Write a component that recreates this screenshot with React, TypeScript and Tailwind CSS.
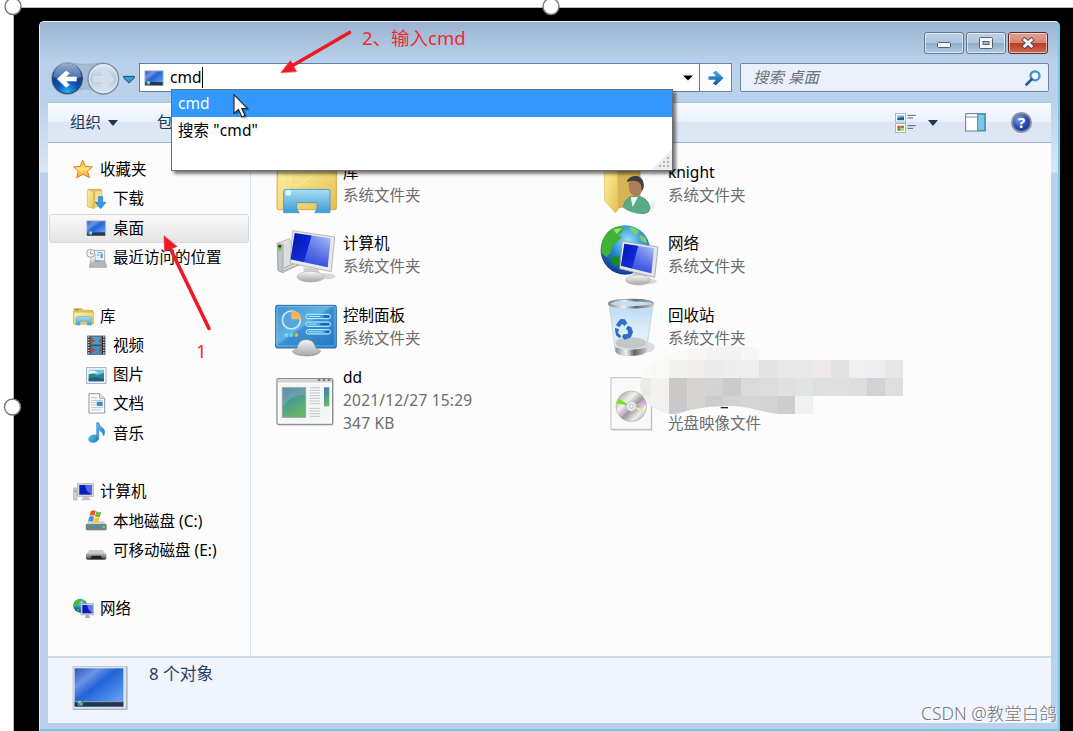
import type { ReactNode } from "react";

interface NavItem {
  label: string;
  level: 0 | 1;
  icon: ReactNode;
  active?: boolean;
}

interface FileItem {
  name: string;
  lines: string[];
  icon: ReactNode;
}

function SmallIcon({ box, children }: { box: string; children: ReactNode }) {
  return (
    <svg className="w-6 h-6 shrink-0" viewBox={box}>
      {children}
    </svg>
  );
}

function LargeIcon({ box, children }: { box: string; children: ReactNode }) {
  return (
    <svg className="w-[68px] h-[68px] shrink-0" viewBox={box}>
      {children}
    </svg>
  );
}

// Shared gradients
function Defs() {
  return (
    <svg className="absolute w-0 h-0">
      <defs>
        <linearGradient id="gold" x1="0" y1="0" x2="1" y2="1">
          <stop offset="0" stopColor="#fbf0a8" />
          <stop offset="0.5" stopColor="#f3dc7c" />
          <stop offset="1" stopColor="#e5bd4c" />
        </linearGradient>
        <linearGradient id="star" x1="0" y1="0" x2="0" y2="1">
          <stop offset="0" stopColor="#ffb043" />
          <stop offset="0.5" stopColor="#ffe478" />
          <stop offset="1" stopColor="#ff9d1e" />
        </linearGradient>
        <linearGradient id="stand" x1="0" y1="0" x2="0" y2="1">
          <stop offset="0" stopColor="#a9dff0" />
          <stop offset="1" stopColor="#3f9bd6" />
        </linearGradient>
        <linearGradient id="screen" x1="0" y1="0" x2="1" y2="0.25">
          <stop offset="0" stopColor="#0612a8" />
          <stop offset="0.5" stopColor="#0a27d8" />
          <stop offset="0.52" stopColor="#7f9df8" />
          <stop offset="1" stopColor="#c3d3ff" />
        </linearGradient>
        <linearGradient id="screenShade" x1="0" y1="0" x2="0" y2="1">
          <stop offset="0" stopColor="#0a20c0" stopOpacity="0" />
          <stop offset="1" stopColor="#1a35e0" stopOpacity="0.85" />
        </linearGradient>
        <linearGradient id="desk" x1="0" y1="0" x2="1" y2="1">
          <stop offset="0" stopColor="#2e55b8" />
          <stop offset="0.25" stopColor="#6c93e4" />
          <stop offset="0.45" stopColor="#2362d8" />
          <stop offset="1" stopColor="#6fb0fb" />
        </linearGradient>
        <linearGradient id="panel" x1="0" y1="0" x2="1" y2="1">
          <stop offset="0" stopColor="#3c93d2" />
          <stop offset="0.45" stopColor="#65b1e3" />
          <stop offset="0.5" stopColor="#3a8fd3" />
          <stop offset="1" stopColor="#2478c3" />
        </linearGradient>
        <linearGradient id="silver" x1="0" y1="0" x2="0" y2="1">
          <stop offset="0" stopColor="#f7f7f7" />
          <stop offset="1" stopColor="#a3a5a7" />
        </linearGradient>
        <linearGradient id="drive" x1="0" y1="0" x2="0" y2="1">
          <stop offset="0" stopColor="#c4c4c4" />
          <stop offset="1" stopColor="#3a3c40" />
        </linearGradient>
        <radialGradient id="globe" cx="0.55" cy="0.3" r="0.7">
          <stop offset="0" stopColor="#8fe0fa" />
          <stop offset="0.5" stopColor="#2b8ad2" />
          <stop offset="1" stopColor="#123a91" />
        </radialGradient>
        <linearGradient id="app" x1="0" y1="0" x2="0.4" y2="1">
          <stop offset="0" stopColor="#4a72ad" />
          <stop offset="0.5" stopColor="#4b9a91" />
          <stop offset="1" stopColor="#66b567" />
        </linearGradient>
        <linearGradient id="note" x1="0" y1="0" x2="1" y2="1">
          <stop offset="0" stopColor="#62c0f0" />
          <stop offset="1" stopColor="#1676c0" />
        </linearGradient>
        <linearGradient id="bin" x1="0" y1="0" x2="0" y2="1">
          <stop offset="0" stopColor="#b9d9f3" />
          <stop offset="0.6" stopColor="#e0f0fb" />
          <stop offset="1" stopColor="#dcdfe2" />
        </linearGradient>
        <linearGradient id="metal" x1="0" y1="0" x2="1" y2="0">
          <stop offset="0" stopColor="#8f8f8f" />
          <stop offset="0.35" stopColor="#f2f2f2" />
          <stop offset="0.6" stopColor="#636363" />
          <stop offset="1" stopColor="#c5c5c5" />
        </linearGradient>
        <linearGradient id="disc" x1="0" y1="0" x2="1" y2="1">
          <stop offset="0" stopColor="#8e8e8e" />
          <stop offset="0.35" stopColor="#f1f1f1" />
          <stop offset="0.55" stopColor="#9a9a9a" />
          <stop offset="0.75" stopColor="#ececec" />
          <stop offset="1" stopColor="#929292" />
        </linearGradient>
        <radialGradient id="back" cx="0.5" cy="0.95" r="0.85">
          <stop offset="0" stopColor="#26b4f5" />
          <stop offset="0.45" stopColor="#0d4fb0" />
          <stop offset="1" stopColor="#16336f" />
        </radialGradient>
        <linearGradient id="backGloss" x1="0" y1="0" x2="0" y2="1">
          <stop offset="0" stopColor="#e2edf9" />
          <stop offset="1" stopColor="#4c7fc6" />
        </linearGradient>
        <linearGradient id="fwd" x1="0" y1="0" x2="0" y2="1">
          <stop offset="0" stopColor="#dfe9f3" />
          <stop offset="0.5" stopColor="#b9cbde" />
          <stop offset="1" stopColor="#d9e8f6" />
        </linearGradient>
        <linearGradient id="go" x1="0" y1="0" x2="0" y2="1">
          <stop offset="0" stopColor="#44abdf" />
          <stop offset="1" stopColor="#1d4ea2" />
        </linearGradient>
      </defs>
    </svg>
  );
}

const deskSmall = (
  <>
    <rect x="139" y="210" width="59" height="47" fill="#a9b6c6" />
    <rect x="142" y="213" width="53" height="41" fill="url(#desk)" />
    <rect x="142" y="246" width="53" height="10" fill="#28364c" />
    <circle cx="151" cy="248" r="6" fill="#49b3e0" />
    <circle cx="153" cy="247" r="3" fill="#d7e36c" />
  </>
);

const navItems: (NavItem | null)[] = [
  {
    label: "收藏夹",
    level: 0,
    icon: (
      <SmallIcon box="96 21 72 72">
        <path d="M128 28 L136 46 L157 48 L142 61 L149 80 L129 70 L110 80 L115 61 L101 48 L121 46Z" fill="url(#star)" stroke="#dd7a1c" strokeWidth="3" strokeLinejoin="round" />
      </SmallIcon>
    ),
  },
  {
    label: "下载",
    level: 1,
    icon: (
      <SmallIcon box="135 109 72 72">
        <path d="M144 116 L184 116 L184 165 L144 169Z" fill="#e0bd5b" stroke="#c8a24a" strokeWidth="2" />
        <path d="M142 117 L160 122 L163 174 L142 168Z" fill="url(#gold)" stroke="#cfaa4b" strokeWidth="1.5" />
        <path d="M164 120 L186 120 L186 166 L164 170Z" fill="#f0dc92" stroke="#cfaa4b" strokeWidth="1.5" />
        <path d="M176 138 h12 v17 h10 L182 174 L166 155 h10Z" fill="#2fa0f0" stroke="#1572b8" strokeWidth="2" />
      </SmallIcon>
    ),
  },
  { label: "桌面", level: 1, active: true, icon: <SmallIcon box="135 197 72 72">{deskSmall}</SmallIcon> },
  {
    label: "最近访问的位置",
    level: 1,
    icon: (
      <SmallIcon box="135 285 72 72">
        <path d="M160 298 h34 v32 h-34Z" fill="#eef3f7" stroke="#a5adb5" strokeWidth="3" />
        <path d="M148 348 L152 330 H194 L199 342 V349 H148Z" fill="#b4b8bc" stroke="#94989c" strokeWidth="2" />
        <path d="M152 310 h14 v24 h-14Z" fill="#e3e6e9" stroke="#a5adb5" strokeWidth="2" />
        <path d="M172 305 h14 M170 312 h10 M161 330 h18" stroke="#5aa7d8" strokeWidth="3" />
        <rect x="182" y="308" width="6" height="13" fill="#4aa0dc" />
        <circle cx="152" cy="307" r="12" fill="#f4f6f8" stroke="#9aa2aa" strokeWidth="3" />
        <path d="M152 299 v9 h7" stroke="#59636e" strokeWidth="2" fill="none" />
      </SmallIcon>
    ),
  },
  null,
  {
    label: "库",
    level: 0,
    icon: (
      <SmallIcon box="96 461 72 72">
        <path d="M102 475 h24 l4 5 h28 v41 h-56Z" fill="#e5c566" stroke="#c9a041" strokeWidth="2" />
        <path d="M101 485 h59 v36 h-59Z" fill="url(#gold)" stroke="#cda74a" strokeWidth="2" />
        <rect x="106" y="476" width="10" height="4" fill="#4aa845" />
        <path d="M108 524 V504 Q108 499 114 499 H148 Q154 499 154 504 V524 H142 V513 H120 V524Z" fill="url(#stand)" stroke="#5faed2" strokeWidth="2" />
      </SmallIcon>
    ),
  },
  {
    label: "视频",
    level: 1,
    icon: (
      <SmallIcon box="135 549 72 72">
        <rect x="142" y="557" width="54" height="57" fill="#30343a" />
        <rect x="152" y="559" width="34" height="25" fill="#4d9ccb" />
        <rect x="152" y="587" width="34" height="25" fill="#3f8fc4" />
        <path d="M152 559 L166 572 L152 584Z M186 559 L176 572 L186 584Z M152 587 L166 600 L152 612Z M186 587 L176 600 L186 612Z" fill="#a6533c" />
        <path d="M146.5 559 V613 M191.5 559 V613" stroke="#e3e8ea" strokeWidth="4" strokeDasharray="4 4" />
      </SmallIcon>
    ),
  },
  {
    label: "图片",
    level: 1,
    icon: (
      <SmallIcon box="135 10 72 72">
        <rect x="140" y="24" width="58" height="47" fill="#fff" stroke="#a2a8ad" strokeWidth="3" />
        <rect x="146" y="30" width="46" height="35" fill="#70c2ea" />
        <path d="M146 44 Q160 36 170 47 L192 40 V65 H146Z" fill="#2c8a7a" />
        <path d="M146 57 Q170 48 192 58 V65 H146Z" fill="#1b6291" />
        <path d="M146 34 q15 -4 28 5 l-28 4Z" fill="#e7f6fc" />
      </SmallIcon>
    ),
  },
  {
    label: "文档",
    level: 1,
    icon: (
      <SmallIcon box="135 95 72 72">
        <path d="M147 100 H179 L194 114 V158 H147Z" fill="#fff" stroke="#8f959a" strokeWidth="3" />
        <path d="M179 100 V114 H194" fill="#e5e9ec" stroke="#8f959a" strokeWidth="2.5" />
        <path d="M153 112 h18 M153 120 h36 M153 127 h14 M153 134 h14 M153 142 h36 M153 149 h30" stroke="#9fb0cc" strokeWidth="2.5" />
        <rect x="170" y="124" width="18" height="13" fill="#3787c6" />
      </SmallIcon>
    ),
  },
  {
    label: "音乐",
    level: 1,
    icon: (
      <SmallIcon box="135 183 72 72">
        <ellipse cx="161" cy="236" rx="15" ry="11" fill="url(#note)" stroke="#1c74b0" strokeWidth="1.5" transform="rotate(-12 161 236)" />
        <path d="M170 237 V188 H176 Q178 199 188 204 Q198 212 191 228 Q189 215 176 211 V238Z" fill="url(#note)" stroke="#1c74b0" strokeWidth="1.5" />
      </SmallIcon>
    ),
  },
  null,
  {
    label: "计算机",
    level: 0,
    icon: (
      <SmallIcon box="96 358 72 72">
        <rect x="101" y="382" width="10" height="36" fill="#cfd3d6" stroke="#a3a8ac" strokeWidth="2" />
        <rect x="103" y="389" width="5" height="5" fill="#3fcf2e" />
        <path d="M122 419 L131 408 H145 L153 419Z" fill="#bfc3c6" />
        <rect x="113" y="369" width="47" height="38" fill="#d4d7da" stroke="#a9adb1" strokeWidth="2" />
        <rect x="118" y="373" width="37" height="29" fill="#0b1fb8" />
        <path d="M135 373 H155 V402 L140 390Z" fill="#4b68e8" />
      </SmallIcon>
    ),
  },
  {
    label: "本地磁盘 (C:)",
    level: 1,
    icon: (
      <SmallIcon box="135 446 72 72">
        <path d="M146 482 H190 L200 494 H138Z" fill="#d3d6d8" />
        <rect x="138" y="492" width="61" height="17" rx="3" fill="#7c8588" stroke="#63696d" strokeWidth="1.5" />
        <rect x="146" y="496" width="40" height="8" fill="#4d8e94" />
        <rect x="188" y="497" width="6" height="6" fill="#52e06a" />
        <path d="M152 453 q8 -6 15 -1 l-4 15 q-7 -4 -14 0Z" fill="#ee5a2c" />
        <path d="M169 453 q8 5 15 1 l-4 15 q-7 4 -15 0Z" fill="#6fba3c" />
        <path d="M148 469 q7 -4 14 0 l-3 15 q-8 -4 -15 0Z" fill="#3f90e0" />
        <path d="M164 471 q8 4 15 0 l-4 15 q-7 4 -15 -1Z" fill="#fbc62e" />
      </SmallIcon>
    ),
  },
  {
    label: "可移动磁盘 (E:)",
    level: 1,
    icon: (
      <SmallIcon box="135 537 72 72">
        <path d="M148 570 H188 L199 585 H138Z" fill="#c9cbcd" />
        <path d="M138 584 Q138 580 144 580 H193 Q199 580 199 584 V595 Q199 599 194 599 H143 Q138 599 138 595Z" fill="url(#drive)" />
        <path d="M150 597 L156 587 H182 L188 597Z" fill="#1f2126" />
      </SmallIcon>
    ),
  },
  null,
  {
    label: "网络",
    level: 0,
    icon: (
      <SmallIcon box="96 710 72 72">
        <circle cx="121" cy="736" r="21" fill="url(#globe)" />
        <path d="M106 722 Q116 714 125 718 Q120 730 112 732 Q110 742 104 742 Q98 732 106 722Z M128 718 l10 8 -8 6Z M108 746 l10 2 -2 8Z" fill="#45c22f" />
        <path d="M134 773 L138 764 H146 L151 773Z" fill="#a9aeb2" />
        <rect x="123" y="730" width="38" height="34" fill="#cfd4d9" stroke="#8f969c" strokeWidth="1.5" />
        <rect x="127" y="734" width="30" height="25" fill="#0b1fb8" />
        <path d="M141 734 H157 V759 L146 748Z" fill="#5b78ee" />
      </SmallIcon>
    ),
  },
];

const leftFiles: FileItem[] = [
  {
    name: "库",
    lines: ["系统文件夹"],
    icon: (
      <LargeIcon box="36 -33 204 204">
        <path d="M52 -5 H224 Q229 -5 229 0 V144 Q229 149 224 149 H56 Q51 149 51 144Z" fill="url(#gold)" stroke="#d2aa49" strokeWidth="3" />
        <path d="M85 98 L60 38 M85 98 L95 30 M85 98 L160 45 M85 98 L54 75 M85 98 L56 130" stroke="#fffbe0" strokeWidth="2" opacity="0.6" />
        <path d="M71 158 V94 Q71 88 78 88 H203 Q210 88 210 94 V158 H164 Q170 150 171 143 V128 H110 V143 Q111 152 118 158Z" fill="url(#stand)" stroke="#4d9fce" strokeWidth="3" />
        <circle cx="85" cy="98" r="9" fill="#e9fbff" opacity="0.8" />
      </LargeIcon>
    ),
  },
  {
    name: "计算机",
    lines: ["系统文件夹"],
    icon: (
      <LargeIcon box="36 181 204 204">
        <ellipse cx="195" cy="347" rx="32" ry="9" fill="#d7d7d7" />
        <path d="M52 248 L88 234 L120 310 L70 336 L54 330Z" fill="#dcdfe1" stroke="#a9acae" strokeWidth="2" />
        <path d="M52 248 L69 252 V336 L54 330Z" fill="#c2c5c8" stroke="#97999b" strokeWidth="2" />
        <rect x="55" y="253" width="9" height="8" fill="#333" />
        <rect x="55" y="262" width="9" height="8" fill="#49df21" />
        <path d="M72 330 L118 312 M72 322 L110 306" stroke="#85888a" strokeWidth="2" />
        <path d="M130 320 L175 325 L182 345 H132Z" fill="#cfd1d3" />
        <ellipse cx="152" cy="348" rx="41" ry="16" fill="url(#silver)" stroke="#a7a9ab" strokeWidth="1.5" />
        <path d="M98 210 L224 229 L214 333 L90 307Z" fill="#e7e9eb" stroke="#a9abad" strokeWidth="2.5" />
        <path d="M104 217 L212 233 L203 320 L92 296Z" fill="url(#screen)" />
        <path d="M104 217 L212 233 L203 320 L92 296Z" fill="url(#screenShade)" />
      </LargeIcon>
    ),
  },
  {
    name: "控制面板",
    lines: ["系统文件夹"],
    icon: (
      <LargeIcon box="36 6 204 204">
        <rect x="47" y="46" width="182" height="128" rx="4" fill="url(#panel)" stroke="#2d6ca6" strokeWidth="3" />
        <rect x="51" y="50" width="174" height="118" rx="2" fill="none" stroke="#8cc8ee" strokeWidth="2" />
        <circle cx="94" cy="90" r="27" fill="#5aa6dc" stroke="#cdeaf8" strokeWidth="5" />
        <path d="M94 60 A30 30 0 0 1 124 88 H94Z" fill="#f9b45a" />
        <g stroke="#d9f1fc" strokeWidth="3" fill="#2fa5ee">
          <rect x="138" y="73" width="73" height="13" rx="6" />
          <rect x="138" y="96" width="73" height="13" rx="6" />
          <rect x="138" y="119" width="73" height="13" rx="6" />
        </g>
        <path d="M190 79.5 H208 M181 102.5 H208 M196 125.5 H208" stroke="#1b62b5" strokeWidth="7" />
        <path d="M145 79.5 H180 M145 102.5 H170 M145 125.5 H188" stroke="#a9e7fc" strokeWidth="3" />
        <circle cx="79" cy="135" r="6" fill="#56e0f4" />
        <circle cx="94" cy="135" r="6" fill="#56e0f4" />
        <circle cx="109" cy="135" r="6" fill="#f4a63f" />
        <path d="M97 183 Q112 180 114 165 Q120 149 139 149 Q158 149 164 165 Q167 179 182 182 Q178 197 140 198 Q101 197 97 183Z" fill="url(#silver)" stroke="#8f9193" strokeWidth="2" />
      </LargeIcon>
    ),
  },
  {
    name: "dd",
    lines: ["2021/12/27 15:29", "347 KB"],
    icon: (
      <LargeIcon box="36 220 204 204">
        <rect x="53" y="267" width="168" height="138" rx="4" fill="#d5d5d5" />
        <rect x="51" y="264" width="167" height="137" rx="4" fill="#fff" stroke="#8a9097" strokeWidth="4" />
        <rect x="53" y="266" width="163" height="10" fill="#cfd5dc" />
        <path d="M173 268 h8 M188 268 h8 M203 268 h8" stroke="#59616b" strokeWidth="4" />
        <rect x="57" y="280" width="155" height="116" fill="#f4f5f5" />
        <rect x="67" y="291" width="70" height="89" fill="url(#app)" stroke="#9aa6a9" strokeWidth="3" />
        <path d="M69 345 Q100 310 136 312 V293 H69Z" fill="#fff" opacity="0.15" />
        <path d="M149 291 h31 M149 299 h31 M149 307 h31 M149 315 h31 M149 323 h31 M149 331 h31 M149 339 h31 M149 353 h31 M149 361 h31 M149 369 h31 M149 377 h31" stroke="#c3c6c8" strokeWidth="3" />
        <rect x="192" y="290" width="16" height="57" fill="url(#app)" />
      </LargeIcon>
    ),
  },
];

const rightFiles: FileItem[] = [
  {
    name: "knight",
    lines: ["系统文件夹"],
    icon: (
      <LargeIcon box="21 -33 204 204">
        <path d="M165 150 L190 118 L198 132 L185 158Z" fill="#f0f0f0" />
        <path d="M78 -5 H150 V128 L78 146Z" fill="#d6b456" stroke="#bf9a45" strokeWidth="2" />
        <path d="M42 -5 H82 L84 150 L75 158 L44 122Z" fill="url(#gold)" stroke="#e0bd5d" strokeWidth="2" />
        <path d="M100 142 Q103 112 132 108 Q170 106 180 140 Q182 158 160 161 Q122 160 100 142Z" fill="#5aab83" stroke="#438d69" strokeWidth="2" />
        <path d="M122 112 L128 142 L144 110Z" fill="#eef4f4" />
        <path d="M116 70 Q118 48 138 48 Q160 50 160 76 Q158 102 142 108 Q124 110 117 90Z" fill="#ab7d59" />
        <path d="M111 62 Q120 46 142 48 Q164 54 161 84 L155 94 Q156 72 146 66 Q130 58 111 66Z" fill="#3d3f43" />
      </LargeIcon>
    ),
  },
  {
    name: "网络",
    lines: ["系统文件夹"],
    icon: (
      <LargeIcon box="21 181 204 204">
        <ellipse cx="165" cy="362" rx="36" ry="9" fill="#dadada" />
        <circle cx="106" cy="268" r="74" fill="url(#globe)" />
        <path d="M44 226 Q62 198 90 197 L104 204 L96 216 L84 224 L96 230 L82 244 L66 256 L62 276 L48 290 L34 276 Q32 246 44 226Z" fill="#3fb336" />
        <path d="M118 198 Q140 202 148 214 L136 222 L124 212Z M148 222 L166 230 L172 250 L154 240Z" fill="#7ed057" />
        <path d="M62 286 L86 288 L88 312 L76 318 L64 304Z" fill="#168c28" />
        <path d="M70 206 L96 203 L80 220Z" fill="#c6f2b0" opacity="0.7" />
        <path d="M130 330 L168 336 L170 356 H126Z" fill="#cdd0d2" />
        <ellipse cx="144" cy="358" rx="37" ry="15" fill="url(#silver)" stroke="#a1a3a5" strokeWidth="1.5" />
        <path d="M97 241 L204 259 L194 350 L89 324Z" fill="#e3e6e8" stroke="#9d9fa1" strokeWidth="2.5" />
        <path d="M103 249 L192 263 L184 338 L93 315Z" fill="url(#screen)" />
        <path d="M103 249 L192 263 L184 338 L93 315Z" fill="url(#screenShade)" />
      </LargeIcon>
    ),
  },
  {
    name: "回收站",
    lines: ["系统文件夹"],
    icon: (
      <LargeIcon box="21 6 204 204">
        <ellipse cx="158" cy="172" rx="36" ry="18" fill="#dcdcdc" />
        <path d="M57 40 L76 184 Q80 197 122 197 Q164 196 168 186 L190 40Z" fill="url(#bin)" stroke="#b9c6d0" strokeWidth="2" />
        <path d="M76 172 Q122 186 170 172 L168 186 Q160 197 122 197 Q80 196 77 186Z" fill="url(#metal)" />
        <ellipse cx="123" cy="159" rx="46" ry="17" fill="#babcbe" opacity="0.75" />
        <ellipse cx="123" cy="41" rx="66" ry="11" fill="#c3dff5" stroke="url(#metal)" strokeWidth="7" />
        <path d="M57 41 Q57 29 123 28 Q190 29 190 41" fill="none" stroke="#7a7e82" strokeWidth="2" />
        <g fill="#2f6cc5">
          <path d="M82 98 L92 87 L104 88 L112 99 L103 108 L96 101 L88 112 L78 106Z" />
          <path d="M113 107 L124 112 L129 126 L123 142 L104 149 L96 141 L100 133 L113 132 L114 122 L108 117Z" />
          <path d="M75 113 L87 118 L84 129 L94 138 L89 145 L78 136 L76 126Z" />
        </g>
      </LargeIcon>
    ),
  },
  {
    name: "",
    lines: ["", "光盘映像文件"],
    icon: (
      <LargeIcon box="21 220 204 204">
        <path d="M66 264 H156 L187 295 V420 H66Z" fill="#d5d5d3" />
        <path d="M63 261 H153 L184 292 V416 H63Z" fill="#f9f9f7" stroke="#b5b5b2" strokeWidth="2.5" />
        <circle cx="124" cy="347" r="46" fill="url(#disc)" stroke="#a3a3a3" strokeWidth="1.5" />
        <path d="M124 347 L80 338 L86 324Z" fill="#73e619" />
        <path d="M124 347 L86 372 L92 378Z M124 347 L168 330 L170 340Z" fill="#e1a9d8" />
        <path d="M124 347 L164 356 L162 366Z" fill="#f2e8a4" />
        <circle cx="124" cy="347" r="15" fill="#e8eaec" stroke="#b5b8bb" strokeWidth="2" />
        <circle cx="124" cy="347" r="6" fill="#fdfdfd" stroke="#a3a6a9" strokeWidth="2" />
      </LargeIcon>
    ),
  },
];

// Colours of the pixelated patch, 54 units per cell
const mosaicRows = [
  { y: 156, cells: ["#fbfbfb", "#fafafa", "#f9f9f8", "#f7f7f7", "#f3f3f2", "#f2f2f2", "#f7f7f7"] },
  {
    y: 210,
    cells: ["#fafafa", "#f8f8f7", "#f0f0ef", "#efeeec", "#ebebea", "#ededed", "#eeeeee", "#e3e3e3", "#e7e8e7", "#e8e8e8", "#ece9e7", "#e1e2e3", "#efefef", "#eeeeee", "#e6e7e6"],
  },
  {
    y: 264,
    cells: ["#e9e9e8", "#f4f2ef", "#cbc9c7", "#d4d4d3", "#d3d3d3", "#cbcbcb", "#d9dbda", "#dcdcdc", "#e0e0e0", "#e2e4e3", "#dedfdf", "#e0e0e1", "#dddedc", "#d1d2d5", "#dedede"],
  },
  { y: 318, cells: ["#f0f0ef", "#f3f1ef", "#c7c9cb", "#d6d3d1", "#cccccb", "#d2d2d2", "#d5d5d5", "#d4d4d3", "#cccdcc", "#eff1f2"] },
];

function Mosaic() {
  return (
    <svg className="absolute left-[640px] top-[340px] w-[270px] h-[80px]" viewBox="150 150 810 240">
      <clipPath id="patch">
        <path d="M150 290 C155 230 200 200 260 185 Q370 164 480 170 L507 176 V210 H939 V318 H669 V372 H560 C500 362 470 348 420 348 C340 348 300 360 250 374 C190 366 155 330 150 290Z" />
      </clipPath>
      <g clipPath="url(#patch)" shapeRendering="crispEdges">
        {mosaicRows.map((row) =>
          row.cells.map((fill, i) => (
            <rect key={`${row.y}-${i}`} x={129 + i * 54} y={row.y} width="55" height="55" fill={fill} />
          ))
        )}
      </g>
      <rect x="392" y="351" width="22" height="4" fill="#222" />
    </svg>
  );
}

function FileTile({ item }: { item: FileItem }) {
  const tall = item.lines.length > 1;
  return (
    <div className="flex items-center gap-[3px] h-[71.5px] w-[325px]">
      {item.icon}
      <div className={`leading-[23px] whitespace-nowrap ${tall ? "pt-[6px]" : "pt-px"}`}>
        <p className="h-[23px] text-black">{item.name}</p>
        {item.lines.map((line, i) => (
          <p key={i} className={`h-[23px] text-[#6d6d6d] ${/^\d/.test(line) ? "tracking-[0.2px]" : ""}`}>
            {line}
          </p>
        ))}
      </div>
    </div>
  );
}

function CaptionButtons() {
  const base =
    "flex items-center justify-center w-[40px] h-[22px] rounded-[3px] border shadow-[inset_0_0_0_1px_rgba(255,255,255,0.55)]";
  const glass = "border-[#66788f] bg-[linear-gradient(#bdd0e5_0%,#b0c6de_48%,#8fabc9_50%,#b0cbe4_100%)]";
  return (
    <div className="flex gap-[2px]">
      <div className={`${base} ${glass}`}>
        <svg className="w-4 h-3" viewBox="0 0 16 12">
          <rect x="1.5" y="5.5" width="13" height="5" rx="1" fill="#f4f4f4" stroke="#566273" />
        </svg>
      </div>
      <div className={`${base} ${glass}`}>
        <svg className="w-4 h-3" viewBox="0 0 16 12">
          <rect x="1.5" y="0.5" width="13" height="11" rx="1" fill="#f4f4f4" stroke="#566273" />
          <rect x="5" y="4.5" width="6" height="3" fill="#9fb6d1" stroke="#566273" />
        </svg>
      </div>
      <div className={`${base} border-[#5e2c2c] bg-[linear-gradient(#e4a090_0%,#d68573_48%,#b83a22_50%,#d06d58_100%)]`}>
        <svg className="w-4 h-3" viewBox="0 0 16 12">
          <path d="M3 1.5 L13 10.5 M13 1.5 L3 10.5" stroke="#54454a" strokeWidth="4.8" />
          <path d="M3.6 2 L12.4 10 M12.4 2 L3.6 10" stroke="#f7f7f7" strokeWidth="3" />
        </svg>
      </div>
    </div>
  );
}

function NavButtons() {
  return (
    <svg className="w-[91px] h-[36px] shrink-0 -mt-[2px]" viewBox="144 180 273 108">
      <path d="M201 188 Q256 198 310 188 L310 283 Q256 250 201 283Z" fill="#a6bcd6" stroke="#8fa6c3" strokeWidth="2" />
      <circle cx="202" cy="236" r="49" fill="#8ea6c4" />
      <circle cx="202" cy="236" r="45" fill="url(#back)" stroke="#27406d" strokeWidth="3" />
      <path d="M160 232 A42 42 0 0 1 244 232 Q202 246 160 232Z" fill="url(#backGloss)" opacity="0.65" />
      <path d="M172 237 L198 213 L208 220 L197 231 H229 V243 H197 L208 255 L198 262Z" fill="#fff" stroke="#fff" strokeWidth="2" strokeLinejoin="round" />
      <circle cx="310" cy="236" r="46" fill="url(#fwd)" stroke="#7d8b9c" strokeWidth="4" />
      <circle cx="310" cy="236" r="42" fill="none" stroke="#e6eef6" strokeWidth="2" />
      <path d="M341 237 L314 211 L304 220 L314 230 H282 V244 H314 L304 255 L314 263Z" fill="#d0dce9" stroke="#e6edf4" strokeWidth="2" />
      <path d="M371 229 H403 V234 L387 249 L371 234Z" fill="#3b9bd0" stroke="#174e7d" strokeWidth="3" strokeLinejoin="round" />
    </svg>
  );
}

function ToolbarIcons() {
  return (
    <div className="flex items-center">
      <svg className="w-[21px] h-[21px]" viewBox="584 333 63 63">
        <rect x="586" y="337" width="30" height="26" fill="#fff" stroke="#8797ab" strokeWidth="2" />
        <path d="M591 343 h20 v14 h-20Z" fill="#6bbce6" />
        <path d="M591 351 l20 -3 v10 h-20Z" fill="#1e5f96" />
        <rect x="586" y="368" width="30" height="26" fill="#fff" stroke="#8797ab" strokeWidth="2" />
        <rect x="591" y="374" width="10" height="8" fill="#e3532e" />
        <rect x="601" y="374" width="10" height="8" fill="#4aa63d" />
        <rect x="591" y="382" width="10" height="7" fill="#2f9c3b" />
        <rect x="601" y="382" width="10" height="7" fill="#f2bd2a" />
        <path d="M622 343 h24 M622 351 h16 M622 374 h24 M622 382 h16" stroke="#53657d" strokeWidth="3" />
      </svg>
      <svg className="w-[10px] h-[6px] ml-[12px]" viewBox="0 0 10 6">
        <path d="M0 0 H10 L5 6Z" fill="#1e3556" />
      </svg>
      <svg className="w-[21px] h-[19px] ml-[27px]" viewBox="795 337 63 57">
        <rect x="797" y="339" width="59" height="52" fill="#fff" stroke="#5f7c9c" strokeWidth="3" />
        <path d="M798 349 H832" stroke="#7a93ad" strokeWidth="3" />
        <rect x="833" y="341" width="21" height="48" fill="#79c9e4" stroke="#3e92b8" strokeWidth="3" />
      </svg>
      <div className="flex items-center justify-center w-[21px] h-[21px] ml-[25px] rounded-full border-2 border-[#8d9299] bg-[radial-gradient(circle_at_35%_30%,#7d9fe8,#2246b4_55%,#12308c)] text-white text-[15px] leading-none font-bold">
        ?
      </div>
    </div>
  );
}

function Suggestions() {
  return (
    <div className="absolute left-[171px] top-[89px] w-[502px] h-[82px] bg-white border border-[#6e6e6e] shadow-[3px_3px_3px_rgba(0,0,0,0.5)] whitespace-nowrap">
      <div className="h-[27px] leading-[27px] pl-[6px] bg-[#3399ff] text-white">cmd</div>
      <div className="h-[27px] leading-[27px] pl-[6px] text-black tracking-[0.1px]">搜索 "cmd"</div>
      <svg className="absolute right-0 bottom-0 w-[21px] h-[21px]" viewBox="0 0 21 21">
        <path d="M21 0 V21 H0Z" fill="#ececec" />
        <g fill="#b5b5b5">
          <rect x="16" y="8" width="2" height="2" />
          <rect x="12" y="12" width="2" height="2" />
          <rect x="16" y="12" width="2" height="2" />
          <rect x="8" y="16" width="2" height="2" />
          <rect x="12" y="16" width="2" height="2" />
          <rect x="16" y="16" width="2" height="2" />
        </g>
      </svg>
    </div>
  );
}

function Annotations() {
  return (
    <>
      <svg className="absolute left-0 top-0 w-full h-full" viewBox="0 0 1073 731">
        {/* mouse pointer */}
        <path d="M236 97 V115.5 L240 111.5 L243.5 119 L247.5 117 L244.5 110.5 H250Z" fill="#000" opacity="0.3" />
        <path d="M234 94.5 V113.5 L238.5 109.5 L241.8 117 L245 115.5 L241.8 108.5 H247.5Z" fill="#fff" stroke="#20242c" strokeWidth="1.1" />
        <g stroke="#ed1c24" strokeLinecap="round" fill="#ed1c24">
          <path d="M349.5 32.5 L291 66.5" strokeWidth="3.6" />
          <path d="M281 72.5 L290.5 60.5 L296.5 71.5Z" strokeWidth="0.5" />
          <path d="M209 328.5 L170.5 249" strokeWidth="3.6" />
          <path d="M164 236 L164.5 251.5 L177 246.5Z" strokeWidth="0.5" />
        </g>
        <g fill="#fff" stroke="#777" strokeWidth="1.4">
          <circle cx="13" cy="6.5" r="8" />
          <circle cx="551" cy="6.5" r="8" />
          <circle cx="12.5" cy="407" r="8" />
        </g>
      </svg>
      <p className="absolute left-[362px] top-[24px] text-[18.5px] leading-[28px] whitespace-nowrap text-[#ee2a35]">2、输入cmd</p>
      <p className="absolute left-[196px] top-[337px] text-[18.5px] leading-[28px] text-[#ee2a35]">1</p>
      <p className="absolute left-[921px] top-[701px] text-[17.5px] leading-6 font-light whitespace-nowrap text-[#777] [text-shadow:1px_1px_0_rgba(255,255,255,0.8)]">
        CSDN @教堂白鸽
      </p>
    </>
  );
}

export default function App() {
  return (
    <div className="relative w-[1073px] h-[731px] overflow-hidden bg-white pl-[13px] pt-[7px] text-[15.5px] font-['Noto_Sans','Noto_Sans_CJK_SC',sans-serif]">
      <Defs />
      <div className="h-full bg-black border-t border-l border-[#bbb] pl-[25px] pt-[13px] pr-[13px]">
        <div className="flex flex-col w-[1021px] h-[710px] rounded-t-[5px] border-t border-l border-[#e3eef9] border-r-2 border-r-[#6fcbe5] border-b-2 border-b-[#62cde8] bg-[linear-gradient(#b9d1ea_0px,#b9d1ea_78px,#d8e7f6_150px,#b9d1ea_151px)] pl-[8px] pr-[7px]">
          {/* caption */}
          <div className="flex justify-end h-[40px] -ml-[8px] -mr-[7px] pr-[10px] pt-[10px] rounded-t-[4px] bg-[linear-gradient(#9ab4d1,#b9d1ea)]">
            <CaptionButtons />
          </div>

          {/* address row */}
          <div className="flex items-start h-[40px] shrink-0">
            <NavButtons />
            <div className="flex items-center h-[29px] w-[561px] mt-px border border-[#5a7fa8] bg-white pl-[4px] pr-[6px]">
              <svg className="w-[20px] h-[16px]" viewBox="138 209 61 49">
                {deskSmall}
              </svg>
              <span className="ml-[6px] leading-[27px] text-black">cmd</span>
              <span className="w-px h-[21px] ml-px bg-black" />
              <svg className="w-[10px] h-[6px] ml-auto" viewBox="0 0 10 6">
                <path d="M0 0.5 H10 L5 5.5Z" fill="#000" />
              </svg>
            </div>
            <div className="flex items-center justify-center h-[29px] w-[32px] mt-px border border-l-0 border-[#71859e] bg-[#f9fbfe]">
              <svg className="w-4 h-4" viewBox="0 0 16 16">
                <path d="M0.5 6.3 H8 L4.8 2.5 L8 0.8 L15.5 8 L8 15.2 L4.8 13.5 L8 9.7 H0.5Z" fill="url(#go)" />
              </svg>
            </div>
            <div className="flex items-center justify-between h-[29px] w-[309px] ml-[8px] mt-px pl-[12px] pr-[7px] rounded-[2px] border border-[#71859e] bg-[#e9f0f9]">
              <span className="italic text-[#6e737a]">搜索 桌面</span>
              <svg className="w-4 h-4" viewBox="0 0 16 16">
                <circle cx="10" cy="5.8" r="4.5" fill="#f4faff" stroke="#3d93d0" strokeWidth="2.2" />
                <path d="M6.8 9.2 L1.5 14.5" stroke="#2a549f" strokeWidth="2.6" strokeLinecap="round" />
              </svg>
            </div>
          </div>

          {/* command bar */}
          <div className="flex items-center h-[41px] shrink-0 pl-[22px] pr-[19px] border-t border-b border-t-[#a9c0da] border-b-[#a3bad6] bg-[linear-gradient(#fbfdff_0%,#e8f0fa_48%,#dce6f4_50%,#dde7f5_100%)] text-[#1e395b]">
            <span>组织</span>
            <svg className="w-[10px] h-[6px] ml-[7px]" viewBox="0 0 10 6">
              <path d="M0 0 H10 L5 6Z" fill="#1e3556" />
            </svg>
            <span className="ml-[39px]">包</span>
            <div className="ml-auto">
              <ToolbarIcons />
            </div>
          </div>

          {/* panes */}
          <div className="flex h-[513px] shrink-0 bg-[#fcfcfc]">
            <nav className="w-[203px] pt-[12px] border-r border-[#d9e6f4]">
              {navItems.map((item, i) =>
                item === null ? (
                  <div key={i} className="h-[29.3px]" />
                ) : (
                  <div
                    key={i}
                    className={`flex items-center gap-[4px] h-[29.3px] mx-px rounded-[3px] border whitespace-nowrap text-black ${
                      item.active ? "border-[#d9d9d9] bg-[linear-gradient(#f8f8f8,#e5e5e5)]" : "border-transparent"
                    } ${item.level === 0 ? "pl-[22px]" : "pl-[35px]"}`}
                  >
                    {item.icon}
                    <span>{item.label}</span>
                  </div>
                )
              )}
            </nav>
            <main className="flex pl-[21px] pt-[4.5px]">
              <div>
                {leftFiles.map((item) => (
                  <FileTile key={item.name} item={item} />
                ))}
              </div>
              <div>
                {rightFiles.map((item) => (
                  <FileTile key={item.name} item={item} />
                ))}
              </div>
            </main>
          </div>

          {/* details pane */}
          <div className="flex items-start h-[67px] shrink-0 pl-[24px] pt-[7px] border-t-2 border-[#ccdbea] bg-[#f0f4fc]">
            <svg className="w-[56px] h-[46px]" viewBox="216 136 168 138">
              <rect x="218" y="140" width="165" height="131" rx="3" fill="#adb7c4" />
              <rect x="220" y="142" width="158" height="125" fill="#dce3ea" />
              <rect x="224" y="146" width="146" height="114" fill="url(#desk)" />
              <rect x="224" y="245" width="146" height="16" fill="#24364f" />
              <path d="M224 246 H370" stroke="#8fa9cb" strokeWidth="3" />
              <circle cx="241" cy="251" r="9" fill="#2d8bb0" />
              <circle cx="239" cy="247" r="4" fill="#e8c64d" />
              <circle cx="244" cy="254" r="3" fill="#78c751" />
            </svg>
            <span className="ml-[21px] -mt-[3px] text-[16.8px] leading-[23px] text-[#2a3f5f]">8 个对象</span>
          </div>
        </div>
      </div>

      <Mosaic />
      <Suggestions />
      <Annotations />
    </div>
  );
}
